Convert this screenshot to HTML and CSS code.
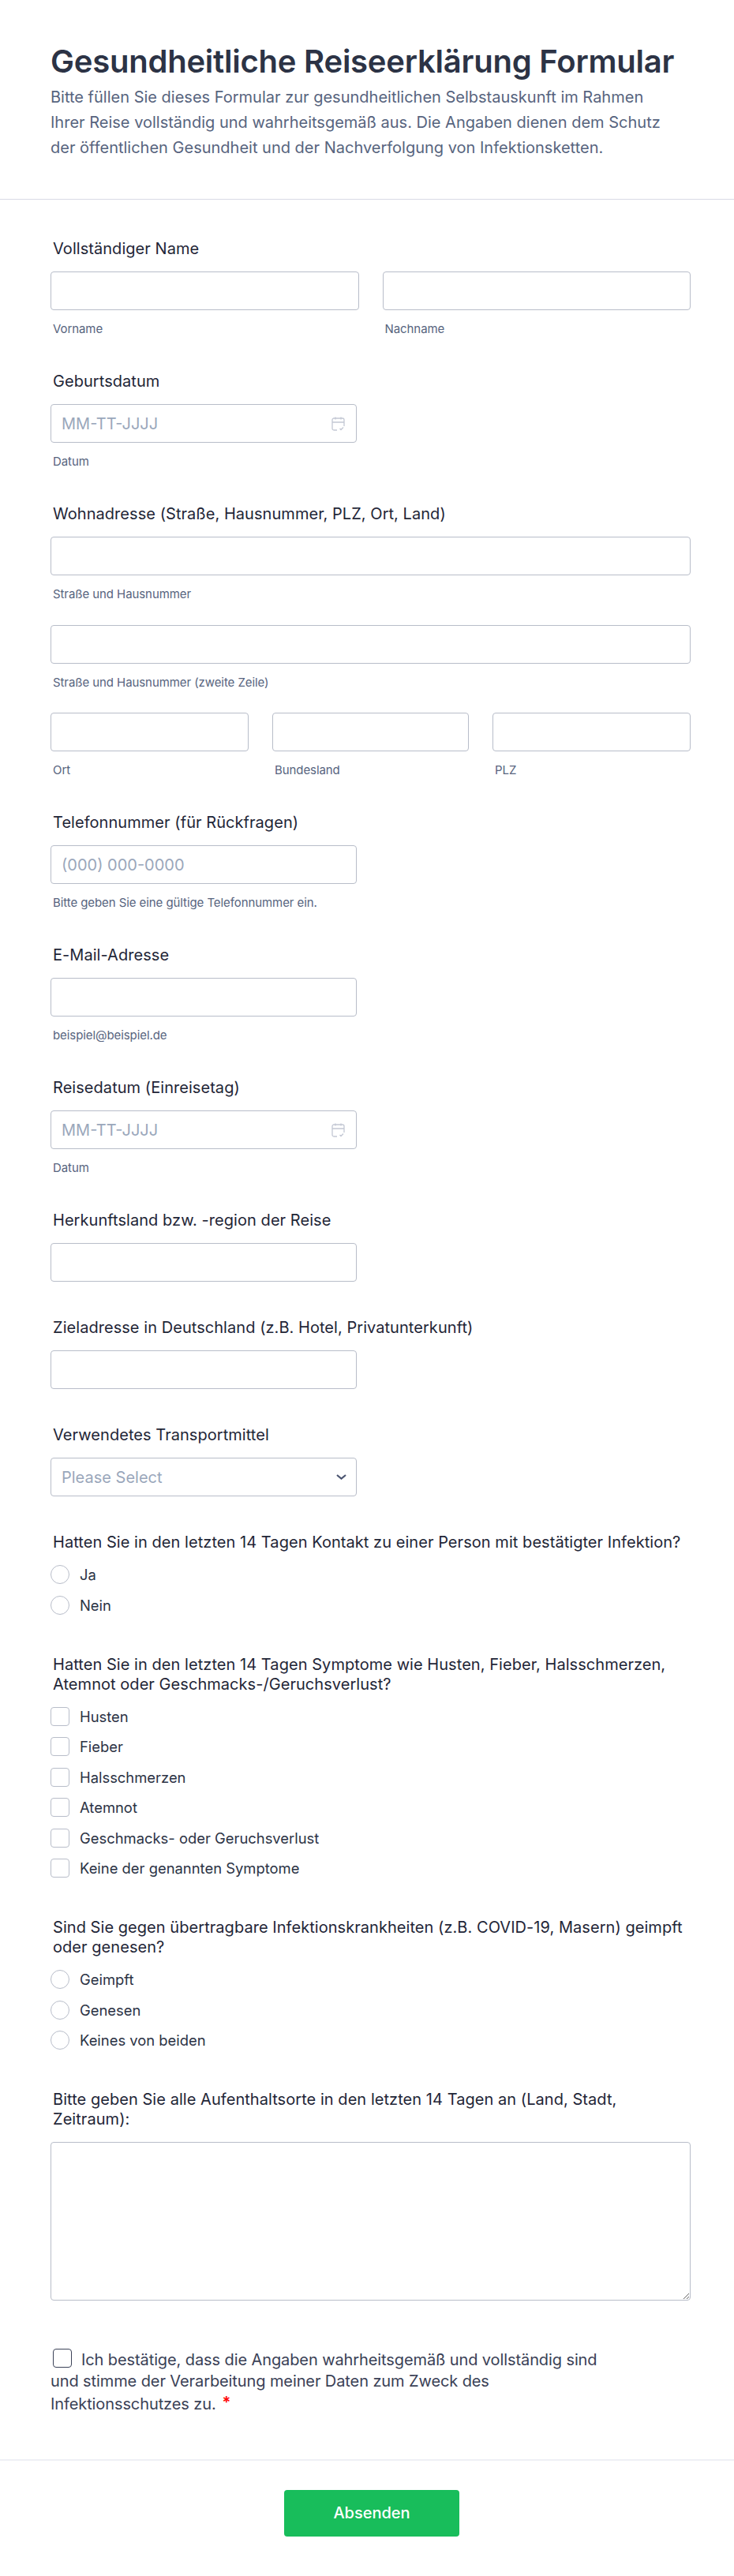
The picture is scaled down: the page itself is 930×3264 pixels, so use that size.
FILE: index.html
```html
<!DOCTYPE html>
<html lang="de">
<head>
<meta charset="utf-8">
<title>Gesundheitliche Reiseerklärung Formular</title>
<link rel="stylesheet" href="styles.css">
</head>
<body>
<form class="form">
  <header class="head">
    <h1 class="title">Gesundheitliche Reiseerklärung Formular</h1>
    <p class="intro">Bitte füllen Sie dieses Formular zur gesundheitlichen Selbstauskunft im Rahmen<br>Ihrer Reise vollständig und wahrheitsgemäß aus. Die Angaben dienen dem Schutz<br>der öffentlichen Gesundheit und der Nachverfolgung von Infektionsketten.</p>
  </header>
  <main class="body">
    <section class="field">
      <div class="label">Vollständiger Name</div>
      <div class="cols cols-2">
        <div><input class="input" type="text"><div class="sub">Vorname</div></div>
        <div><input class="input" type="text"><div class="sub">Nachname</div></div>
      </div>
    </section>
    <section class="field">
      <div class="label">Geburtsdatum</div>
      <div class="narrow date">
        <input class="input" type="text" placeholder="MM-TT-JJJJ">
        <svg class="cal" viewBox="0 0 17 18" width="17" height="18" fill="none" stroke="#c3c8d4" stroke-width="1.3"><path d="M7 17H3a2 2 0 0 1-2-2V4a2 2 0 0 1 2-2h11a2 2 0 0 1 2 2v8M1 7h15M5 .5v3M12 .5v3M10.500 15l1.500 1.500 3-3"/></svg>
      </div>
      <div class="sub">Datum</div>
    </section>
    <section class="field">
      <div class="label">Wohnadresse (Straße, Hausnummer, PLZ, Ort, Land)</div>
      <input class="input" type="text"><div class="sub">Straße und Hausnummer</div>
      <input class="input addr" type="text"><div class="sub">Straße und Hausnummer (zweite Zeile)</div>
      <div class="cols cols-3 addr">
        <div><input class="input" type="text"><div class="sub">Ort</div></div>
        <div><input class="input" type="text"><div class="sub">Bundesland</div></div>
        <div><input class="input" type="text"><div class="sub">PLZ</div></div>
      </div>
    </section>
    <section class="field">
      <div class="label">Telefonnummer (für Rückfragen)</div>
      <div class="narrow"><input class="input" type="text" placeholder="(000) 000-0000"></div>
      <div class="sub">Bitte geben Sie eine gültige Telefonnummer ein.</div>
    </section>
    <section class="field">
      <div class="label">E-Mail-Adresse</div>
      <div class="narrow"><input class="input" type="text"></div>
      <div class="sub">beispiel@beispiel.de</div>
    </section>
    <section class="field">
      <div class="label">Reisedatum (Einreisetag)</div>
      <div class="narrow date">
        <input class="input" type="text" placeholder="MM-TT-JJJJ">
        <svg class="cal" viewBox="0 0 17 18" width="17" height="18" fill="none" stroke="#c3c8d4" stroke-width="1.3"><path d="M7 17H3a2 2 0 0 1-2-2V4a2 2 0 0 1 2-2h11a2 2 0 0 1 2 2v8M1 7h15M5 .5v3M12 .5v3M10.500 15l1.500 1.500 3-3"/></svg>
      </div>
      <div class="sub">Datum</div>
    </section>
    <section class="field">
      <div class="label">Herkunftsland bzw. -region der Reise</div>
      <div class="narrow"><input class="input" type="text"></div>
    </section>
    <section class="field">
      <div class="label">Zieladresse in Deutschland (z.B. Hotel, Privatunterkunft)</div>
      <div class="narrow"><input class="input" type="text"></div>
    </section>
    <section class="field">
      <div class="label">Verwendetes Transportmittel</div>
      <div class="narrow select">
        <span class="select-text">Please Select</span>
        <svg class="chev" viewBox="0 0 13 7" width="13" height="7" fill="none" stroke="#4a5470" stroke-width="2.200"><path d="M1 1l5.500 4.500L12 1"/></svg>
      </div>
    </section>
    <section class="field field-choice">
      <div class="label">Hatten Sie in den letzten 14 Tagen Kontakt zu einer Person mit bestätigter Infektion?</div>
      <div class="options">
        <label class="option"><span class="radio"></span>Ja</label>
        <label class="option"><span class="radio"></span>Nein</label>
      </div>
    </section>
    <section class="field field-choice">
      <div class="label">Hatten Sie in den letzten 14 Tagen Symptome wie Husten, Fieber, Halsschmerzen, Atemnot oder Geschmacks-/Geruchsverlust?</div>
      <div class="options">
        <label class="option"><span class="check"></span>Husten</label>
        <label class="option"><span class="check"></span>Fieber</label>
        <label class="option"><span class="check"></span>Halsschmerzen</label>
        <label class="option"><span class="check"></span>Atemnot</label>
        <label class="option"><span class="check"></span>Geschmacks- oder Geruchsverlust</label>
        <label class="option"><span class="check"></span>Keine der genannten Symptome</label>
      </div>
    </section>
    <section class="field field-choice">
      <div class="label">Sind Sie gegen übertragbare Infektionskrankheiten (z.B. COVID-19, Masern) geimpft oder genesen?</div>
      <div class="options">
        <label class="option"><span class="radio"></span>Geimpft</label>
        <label class="option"><span class="radio"></span>Genesen</label>
        <label class="option"><span class="radio"></span>Keines von beiden</label>
      </div>
    </section>
    <section class="field">
      <div class="label">Bitte geben Sie alle Aufenthaltsorte in den letzten 14 Tagen an (Land, Stadt, Zeitraum):</div>
      <textarea class="area"></textarea>
    </section>
    <section class="terms">
      <span class="terms-box"></span>Ich bestätige, dass die Angaben wahrheitsgemäß und vollständig sind<br>und stimme der Verarbeitung meiner Daten zum Zweck des<br>Infektionsschutzes zu.<span class="req">*</span>
    </section>
  </main>
  <footer class="foot">
    <button class="submit" type="button">Absenden</button>
  </footer>
</form>
</body>
</html>
```
FILE: styles.css
```css
* { box-sizing: border-box; }
html, body { margin: 0; padding: 0; background: #fff; }
body { font-family: Inter, "Liberation Sans", sans-serif; color: #2c3345; }
.form { width: 930px; height: 3264px; }
.head { padding: 54px 40px 0 64px; border-bottom: 1px solid #d8dae6; height: 253px; }
.title { margin: 0 0 5px; font-size: 40px; line-height: 48px; font-weight: 600; letter-spacing: -0.23px; color: #2c3345; }
.intro { margin: 0; font-size: 20px; line-height: 32px; color: #57647e; }
.body { padding: 49px 55px 0 64px; }
.field { margin-bottom: 45px; }
.field-choice { padding-bottom: 5px; }
.label { padding: 1px 0 0 3px; margin-bottom: 16px; font-size: 20px; line-height: 25px; font-weight: 400; letter-spacing: 0.05px; color: #1f2637; }
.input { display: block; width: 100%; height: 49px; padding: 0 13px; border: 1px solid #b8bdc9; border-radius: 4px; background: #fff; font: 400 20px Inter, sans-serif; color: #2c3345; outline: 0; }
.input::placeholder { color: #9aa7bb; opacity: 1; }
.sub { padding-left: 3px; margin-top: 15px; font-size: 15px; line-height: 17px; letter-spacing: -0.08px; color: #57647e; }
.addr { margin-top: 30.7px; }
.cols { display: grid; }
.cols-2 { grid-template-columns: 390.500px 390.500px; gap: 30px; }
.cols-3 { grid-template-columns: 251px 249px 251px; gap: 30px; }
.narrow { width: 388px; }
.date { position: relative; }
.cal { position: absolute; right: 15px; top: 16px; }
.select { position: relative; height: 49px; padding: 0 13px; display: flex; align-items: center; border: 1px solid #b8bdc9; border-radius: 4px; font-size: 20px; color: #9aa7bb; }
.chev { position: absolute; right: 12px; top: 20px; }
.options { display: flex; flex-direction: column; gap: 14.5px; margin-top: 1px; }
.option { display: flex; align-items: center; gap: 13px; height: 24px; font-size: 18.4px; color: #2c3345; }
.radio { width: 24px; height: 24px; border: 1px solid #b8bdc9; border-radius: 50%; }
.check { width: 24px; height: 24px; border: 1px solid #b8bdc9; border-radius: 4px; }
.area { display: block; width: 100%; height: 201px; border: 1px solid #b8bdc9; border-radius: 4px; background: #fff; outline: 0; }
.terms { margin-top: 61px; font-size: 20px; line-height: 27px; letter-spacing: -0.1px; color: #3a4156; }
.terms-box { display: inline-block; width: 24px; height: 24px; margin: 0 12px 0 3px; vertical-align: -3.5px; border: 1.5px solid #3c4358; border-radius: 4px; }
.req { margin-left: 8px; color: #f00; font-size: 20px; font-weight: 600; vertical-align: 2px; }
.foot { margin-top: 56px; border-top: 2px solid #eff0f5; padding: 37px 0 0 12px; display: flex; justify-content: center; }
.submit { width: 222px; height: 59px; border: 0; border-radius: 4px; background: #18bd5b; color: #fff; font: 500 20px Inter, sans-serif; }
```
